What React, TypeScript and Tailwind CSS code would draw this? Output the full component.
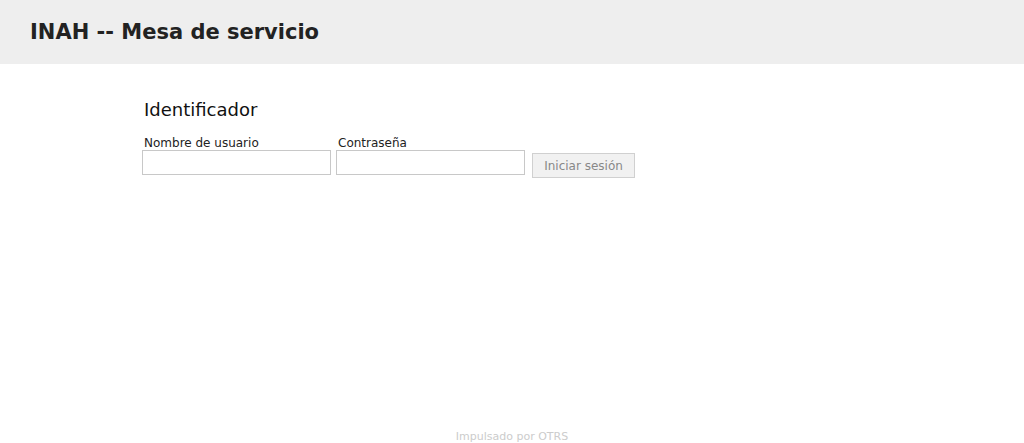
import React from 'react'

const App: React.FC = () => {
  return (
    <div className="flex flex-col h-screen w-full bg-white font-['DejaVu_Sans',sans-serif] text-[#222]">
      {/* Header */}
      <div className="h-16 flex items-center px-[30px] bg-[#eeeeee] shrink-0">
        <h1 className="text-[21px] font-bold text-[#222] leading-none">INAH -- Mesa de servicio</h1>
      </div>

      {/* Login box */}
      <div className="flex-1 pl-[142px] pt-[34px]">
        <h2 className="pl-[2px] text-[18px] leading-[24px] text-[#111]">Identificador</h2>
        <div className="flex items-start gap-[5px] mt-[13px]">
          <div className="flex flex-col">
            <label className="pl-[2px] pt-[1px] text-[12px] leading-[14px] text-[#222]">Nombre de usuario</label>
            <input type="text" className="w-[189px] h-[25px] border border-[#c8c8c8] bg-white" />
          </div>
          <div className="flex flex-col">
            <label className="pl-[2px] pt-[1px] text-[12px] leading-[14px] text-[#222]">Contraseña</label>
            <input type="password" className="w-[189px] h-[25px] border border-[#c8c8c8] bg-white" />
          </div>
          <button className="ml-[2px] mt-[18px] w-[103px] h-[25px] border border-[#d0d0d0] bg-[#f1f1f1] text-[12px] text-[#888]">
            Iniciar sesión
          </button>
        </div>
      </div>

      {/* Footer */}
      <div className="h-[14px] mb-[-1px] flex justify-center items-start shrink-0">
        <span className="text-[11px] leading-[14px] text-[#cccccc]">Impulsado por OTRS</span>
      </div>
    </div>
  )
}

export default App
